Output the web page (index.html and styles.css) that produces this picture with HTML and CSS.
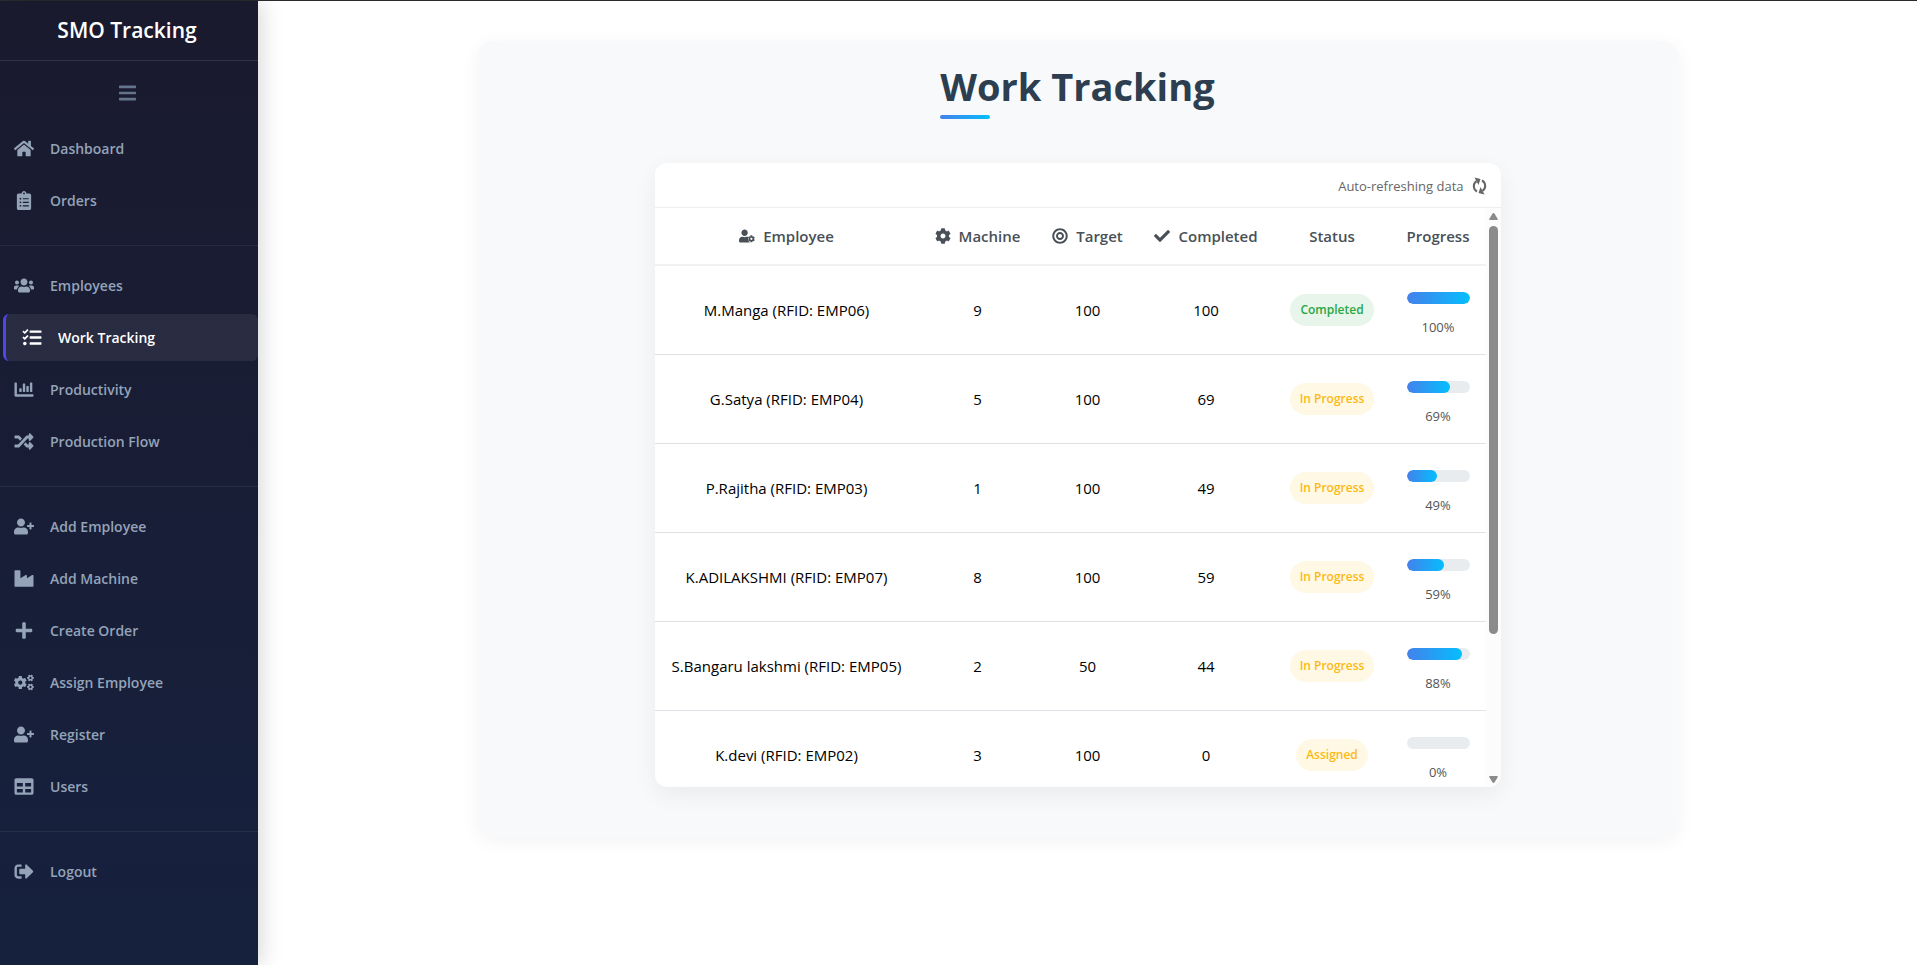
FILE: index.html
```html
<!DOCTYPE html>
<html lang="en">
<head>
<meta charset="utf-8">
<title>Work Tracking</title>
<link rel="stylesheet" href="styles.css">
</head>
<body>
<svg class="sprite" aria-hidden="true">
  <symbol id="bars" viewBox="0 0 448 512"><path d="M16 132h416c8.800 0 16-7.200 16-16V76c0-8.800-7.200-16-16-16H16C7.200 60 0 67.200 0 76v40c0 8.800 7.200 16 16 16zm0 160h416c8.800 0 16-7.200 16-16v-40c0-8.800-7.200-16-16-16H16c-8.800 0-16 7.200-16 16v40c0 8.800 7.200 16 16 16zm0 160h416c8.800 0 16-7.200 16-16v-40c0-8.800-7.200-16-16-16H16c-8.800 0-16 7.200-16 16v40c0 8.800 7.200 16 16 16z"/></symbol>
  <symbol id="home" viewBox="0 0 576 512"><path d="M280.370 148.260L96 300.110V464a16 16 0 0 0 16 16l112.060-.290a16 16 0 0 0 15.920-16V368a16 16 0 0 1 16-16h64a16 16 0 0 1 16 16v95.640a16 16 0 0 0 16 16.050L464 480a16 16 0 0 0 16-16V300L295.670 148.260a12.190 12.190 0 0 0-15.300 0zM571.600 251.470L488 182.560V44.050a12 12 0 0 0-12-12h-56a12 12 0 0 0-12 12v72.610L318.470 43a48 48 0 0 0-61 0L4.340 251.470a12 12 0 0 0-1.600 16.900l25.500 31A12 12 0 0 0 45.150 301l235.220-193.740a12.190 12.190 0 0 1 15.300 0L530.900 301a12 12 0 0 0 16.900-1.600l25.500-31a12 12 0 0 0-1.700-16.930z"/></symbol>
  <symbol id="clipboard" viewBox="0 0 384 512"><path d="M336 64h-80c0-35.300-28.700-64-64-64s-64 28.700-64 64H48C21.500 64 0 85.500 0 112v352c0 26.500 21.500 48 48 48h288c26.500 0 48-21.500 48-48V112c0-26.500-21.500-48-48-48zM96 424c-13.300 0-24-10.700-24-24s10.700-24 24-24 24 10.700 24 24-10.700 24-24 24zm0-96c-13.300 0-24-10.700-24-24s10.700-24 24-24 24 10.700 24 24-10.700 24-24 24zm0-96c-13.300 0-24-10.700-24-24s10.700-24 24-24 24 10.700 24 24-10.700 24-24 24zm96-192c13.300 0 24 10.700 24 24s-10.700 24-24 24-24-10.700-24-24 10.700-24 24-24zm128 368c0 4.400-3.600 8-8 8H168c-4.400 0-8-3.600-8-8v-16c0-4.400 3.600-8 8-8h144c4.400 0 8 3.600 8 8v16zm0-96c0 4.400-3.600 8-8 8H168c-4.400 0-8-3.600-8-8v-16c0-4.400 3.600-8 8-8h144c4.400 0 8 3.600 8 8v16zm0-96c0 4.400-3.600 8-8 8H168c-4.400 0-8-3.600-8-8v-16c0-4.400 3.600-8 8-8h144c4.400 0 8 3.600 8 8v16z"/></symbol>
  <symbol id="users" viewBox="0 0 640 512"><path d="M96 224c35.300 0 64-28.700 64-64s-28.700-64-64-64-64 28.700-64 64 28.700 64 64 64zm448 0c35.300 0 64-28.700 64-64s-28.700-64-64-64-64 28.700-64 64 28.700 64 64 64zm32 32h-64c-17.600 0-33.500 7.100-45.100 18.600 40.300 22.100 68.900 62 75.100 109.400h66c17.700 0 32-14.300 32-32v-32c0-35.300-28.700-64-64-64zm-256 0c61.900 0 112-50.100 112-112S381.900 32 320 32 208 82.100 208 144s50.100 112 112 112zm76.800 32h-8.300c-20.800 10-43.900 16-68.500 16s-47.600-6-68.500-16h-8.300C179.600 288 128 339.600 128 403.200V432c0 26.500 21.500 48 48 48h288c26.500 0 48-21.500 48-48v-28.800c0-63.600-51.600-115.200-115.200-115.200zm-223.700-13.400C161.500 263.100 145.600 256 128 256H64c-35.300 0-64 28.700-64 64v32c0 17.700 14.300 32 32 32h65.900c6.300-47.400 34.900-87.300 75.200-109.400z"/></symbol>
  <symbol id="tasks" viewBox="0 0 512 512"><path d="M139.610 35.500a12 12 0 0 0-17 0L58.930 98.810l-22.700-22.120a12 12 0 0 0-17 0L3.530 92.410a12 12 0 0 0 0 17l47.590 47.400a12.780 12.780 0 0 0 17.610 0l15.590-15.620L156.520 69a12.090 12.090 0 0 0 .090-17zm0 159.190a12 12 0 0 0-17 0l-63.680 63.720-22.700-22.100a12 12 0 0 0-17 0L3.530 252a12 12 0 0 0 0 17L51 316.500a12.770 12.770 0 0 0 17.600 0l15.700-15.690 72.200-72.220a12 12 0 0 0 .090-16.900zM64 368c-26.490 0-48.590 21.500-48.590 48S37.530 464 64 464a48 48 0 0 0 0-96zm432 16H208a16 16 0 0 0-16 16v32a16 16 0 0 0 16 16h288a16 16 0 0 0 16-16v-32a16 16 0 0 0-16-16zm0-320H208a16 16 0 0 0-16 16v32a16 16 0 0 0 16 16h288a16 16 0 0 0 16-16V80a16 16 0 0 0-16-16zm0 160H208a16 16 0 0 0-16 16v32a16 16 0 0 0 16 16h288a16 16 0 0 0 16-16v-32a16 16 0 0 0-16-16z"/></symbol>
  <symbol id="chart" viewBox="0 0 512 512"><path d="M332.800 320h38.400c6.400 0 12.800-6.400 12.800-12.800V172.800c0-6.400-6.400-12.800-12.800-12.800h-38.400c-6.400 0-12.800 6.400-12.800 12.800v134.400c0 6.400 6.400 12.800 12.800 12.800zm96 0h38.400c6.400 0 12.800-6.400 12.800-12.800V76.800c0-6.400-6.400-12.800-12.800-12.800h-38.400c-6.400 0-12.800 6.400-12.800 12.800v230.400c0 6.400 6.400 12.800 12.800 12.800zm-288 0h38.400c6.400 0 12.800-6.400 12.800-12.800v-70.400c0-6.400-6.400-12.800-12.800-12.800h-38.400c-6.400 0-12.800 6.400-12.800 12.800v70.400c0 6.400 6.400 12.800 12.800 12.800zm96 0h38.400c6.400 0 12.800-6.400 12.800-12.800V108.800c0-6.400-6.400-12.800-12.800-12.800h-38.400c-6.400 0-12.800 6.400-12.800 12.800v198.400c0 6.400 6.400 12.800 12.800 12.800zM496 384H64V80c0-8.840-7.160-16-16-16H16C7.160 64 0 71.160 0 80v336c0 17.670 14.330 32 32 32h464c8.840 0 16-7.160 16-16v-32c0-8.840-7.160-16-16-16z"/></symbol>
  <symbol id="shuffle" viewBox="0 0 512 512"><path d="M504.971 359.029c9.373 9.373 9.373 24.569 0 33.941l-80 79.984c-15.010 15.010-40.971 4.490-40.971-16.971V416h-58.785a12.004 12.004 0 0 1-8.773-3.812l-70.556-75.596 53.333-57.143L352 336h32v-39.981c0-21.438 25.943-31.998 40.971-16.971l80 79.981zM12 176h84l52.781 56.551 53.333-57.143-70.556-75.596A11.999 11.999 0 0 0 122.785 96H12c-6.627 0-12 5.373-12 12v56c0 6.627 5.373 12 12 12zm372 0v39.984c0 21.460 25.961 31.980 40.971 16.971l80-79.984c9.373-9.373 9.373-24.569 0-33.941l-80-79.981C409.943 24.021 384 34.582 384 56.019V96h-58.785a12.004 12.004 0 0 0-8.773 3.812L96 336H12c-6.627 0-12 5.373-12 12v56c0 6.627 5.373 12 12 12h110.785c3.326 0 6.503-1.381 8.773-3.812L352 176h32z"/></symbol>
  <symbol id="user-plus" viewBox="0 0 640 512"><path d="M624 208h-64v-64c0-8.800-7.200-16-16-16h-32c-8.800 0-16 7.200-16 16v64h-64c-8.800 0-16 7.200-16 16v32c0 8.800 7.200 16 16 16h64v64c0 8.800 7.200 16 16 16h32c8.800 0 16-7.200 16-16v-64h64c8.800 0 16-7.200 16-16v-32c0-8.800-7.200-16-16-16zm-400 48c70.700 0 128-57.300 128-128S294.700 0 224 0 96 57.300 96 128s57.300 128 128 128zm89.600 32h-16.700c-22.200 10.200-46.900 16-72.900 16s-50.600-5.800-72.900-16h-16.700C60.200 288 0 348.200 0 422.400V464c0 26.500 21.500 48 48 48h352c26.500 0 48-21.500 48-48v-41.600c0-74.200-60.200-134.400-134.400-134.400z"/></symbol>
  <symbol id="industry" viewBox="0 0 512 512"><path d="M475.115 163.781L336 252.309v-68.280c0-18.916-20.931-30.399-36.885-20.248L160 252.309V56c0-13.255-10.745-24-24-24H24C10.745 32 0 42.745 0 56v400c0 13.255 10.745 24 24 24h464c13.255 0 24-10.745 24-24V184.029c0-18.917-20.931-30.399-36.885-20.248z"/></symbol>
  <symbol id="plus" viewBox="0 0 448 512"><path d="M416 208H272V64c0-17.670-14.330-32-32-32h-32c-17.670 0-32 14.330-32 32v144H32c-17.670 0-32 14.330-32 32v32c0 17.670 14.330 32 32 32h144v144c0 17.670 14.330 32 32 32h32c17.670 0 32-14.330 32-32V304h144c17.670 0 32-14.330 32-32v-32c0-17.670-14.330-32-32-32z"/></symbol>
  <symbol id="cog" viewBox="0 0 512 512"><path id="gear" d="M487.400 315.700l-42.600-24.600c4.300-23.200 4.300-47 0-70.200l42.600-24.600c4.900-2.800 7.100-8.600 5.500-14-11.100-35.600-30-67.800-54.700-94.600-3.800-4.100-10-5.100-14.800-2.300L380.800 110c-17.900-15.400-38.500-27.300-60.800-35.100V25.800c0-5.600-3.900-10.500-9.400-11.700-36.700-8.200-74.300-7.800-109.200 0-5.500 1.200-9.400 6.100-9.400 11.700V75c-22.200 7.900-42.800 19.800-60.800 35.100L88.700 85.500c-4.900-2.800-11-1.900-14.800 2.300-24.700 26.700-43.600 58.900-54.700 94.600-1.700 5.400.600 11.200 5.500 14L67.300 221c-4.300 23.200-4.300 47 0 70.200l-42.600 24.600c-4.900 2.800-7.100 8.600-5.500 14 11.100 35.600 30 67.800 54.700 94.600 3.800 4.100 10 5.100 14.800 2.300l42.600-24.600c17.900 15.400 38.500 27.300 60.800 35.100v49.200c0 5.600 3.900 10.500 9.400 11.700 36.700 8.200 74.300 7.800 109.200 0 5.500-1.200 9.400-6.100 9.400-11.700v-49.200c22.200-7.900 42.800-19.800 60.800-35.100l42.600 24.600c4.900 2.800 11 1.900 14.800-2.300 24.700-26.700 43.600-58.900 54.700-94.600 1.500-5.500-.700-11.300-5.600-14.100zM256 336c-44.100 0-80-35.900-80-80s35.900-80 80-80 80 35.900 80 80-35.900 80-80 80z"/></symbol>
  <symbol id="cogs" viewBox="0 0 640 512"><use href="#gear" transform="translate(-14 42) scale(.840)"/><use href="#gear" transform="translate(414 -2) scale(.440) rotate(30 256 256)"/><use href="#gear" transform="translate(414 286) scale(.440) rotate(30 256 256)"/></symbol>
  <symbol id="user-cog" viewBox="0 0 640 512"><path d="M224 256c70.700 0 128-57.300 128-128S294.700 0 224 0 96 57.300 96 128s57.300 128 128 128zm89.600 32h-16.700c-22.200 10.200-46.900 16-72.900 16s-50.600-5.800-72.900-16h-16.700C60.200 288 0 348.200 0 422.400V464c0 26.500 21.500 48 48 48h352c12 0 22-4 30-11-40-28-66-62-72-100 0-12 12-22 10-35-4-16-6-40 6-60-18-11-38-18-60.400-18z"/><use href="#gear" transform="translate(350 222) scale(.570)"/></symbol>
  <symbol id="table" viewBox="0 0 512 512"><path d="M464 32H48C21.490 32 0 53.490 0 80v352c0 26.510 21.490 48 48 48h416c26.510 0 48-21.490 48-48V80c0-26.510-21.490-48-48-48zM224 416H64v-96h160v96zm0-160H64v-96h160v96zm224 160H288v-96h160v96zm0-160H288v-96h160v96z"/></symbol>
  <symbol id="logout" viewBox="0 0 512 512"><path d="M497 273L329 441c-15 15-41 4.500-41-17v-96H152c-13.300 0-24-10.700-24-24v-96c0-13.300 10.700-24 24-24h136V88c0-21.400 25.900-32 41-17l168 168c9.300 9.400 9.300 24.600 0 34zM192 436v-40c0-6.600-5.400-12-12-12H96c-17.700 0-32-14.300-32-32V160c0-17.700 14.300-32 32-32h84c6.600 0 12-5.400 12-12V76c0-6.600-5.400-12-12-12H96c-53 0-96 43-96 96v192c0 53 43 96 96 96h84c6.600 0 12-5.400 12-12z"/></symbol>
  <symbol id="target" viewBox="0 0 496 512"><path d="M248 8C111.030 8 0 119.030 0 256s111.030 248 248 248 248-111.030 248-248S384.970 8 248 8zm0 432c-101.690 0-184-82.290-184-184 0-101.690 82.290-184 184-184 101.690 0 184 82.290 184 184 0 101.690-82.290 184-184 184zm0-312c-70.690 0-128 57.310-128 128s57.310 128 128 128 128-57.310 128-128-57.310-128-128-128zm0 192c-35.290 0-64-28.710-64-64s28.710-64 64-64 64 28.710 64 64-28.710 64-64 64z"/></symbol>
  <symbol id="check" viewBox="0 0 512 512"><path d="M173.898 439.404l-166.400-166.400c-9.997-9.997-9.997-26.206 0-36.204l36.203-36.204c9.997-9.998 26.207-9.998 36.204 0L192 312.690 432.095 72.596c9.997-9.997 26.207-9.997 36.204 0l36.203 36.204c9.997 9.997 9.997 26.206 0 36.204l-294.400 294.401c-9.998 9.997-26.207 9.997-36.204-.001z"/></symbol>
  <symbol id="sync" viewBox="1 0 14 18"><path d="M5.500 14.500A6 6 0 0 1 5 4.200M10.500 3.500A6 6 0 0 1 11 13.800" fill="none" stroke="currentColor" stroke-width="2"/><path d="M3 .6l6 1.400L7 8zM13 17.400l-6-1.400L9 10z"/></symbol>
</svg>
<div class="app">
  <aside class="sidebar">
    <div class="brand">SMO Tracking</div>
    <button class="toggle" type="button" aria-label="Toggle menu"><svg class="icon"><use href="#bars"/></svg></button>
    <nav class="nav">
      <div class="group">
        <a class="item" href="#"><svg class="icon"><use href="#home"/></svg>Dashboard</a>
        <a class="item" href="#"><svg class="icon"><use href="#clipboard"/></svg>Orders</a>
      </div>
      <div class="group">
        <a class="item" href="#"><svg class="icon"><use href="#users"/></svg>Employees</a>
        <a class="item active" href="#" aria-current="page"><svg class="icon"><use href="#tasks"/></svg>Work Tracking</a>
        <a class="item" href="#"><svg class="icon"><use href="#chart"/></svg>Productivity</a>
        <a class="item" href="#"><svg class="icon"><use href="#shuffle"/></svg>Production Flow</a>
      </div>
      <div class="group">
        <a class="item" href="#"><svg class="icon"><use href="#user-plus"/></svg>Add Employee</a>
        <a class="item" href="#"><svg class="icon"><use href="#industry"/></svg>Add Machine</a>
        <a class="item" href="#"><svg class="icon"><use href="#plus"/></svg>Create Order</a>
        <a class="item" href="#"><svg class="icon"><use href="#cogs"/></svg>Assign Employee</a>
        <a class="item" href="#"><svg class="icon"><use href="#user-plus"/></svg>Register</a>
        <a class="item" href="#"><svg class="icon"><use href="#table"/></svg>Users</a>
      </div>
      <div class="group">
        <a class="item" href="#"><svg class="icon"><use href="#logout"/></svg>Logout</a>
      </div>
    </nav>
  </aside>
  <main class="main">
    <section class="panel">
      <h1 class="title">Work Tracking</h1>
      <div class="card">
        <div class="refresh">Auto-refreshing data<svg class="icon"><use href="#sync"/></svg></div>
        <div class="body">
          <div class="scroller">
            <table class="table">
              <colgroup><col class="c-employee"><col class="c-machine"><col class="c-target"><col class="c-completed"><col class="c-status"><col class="c-progress"></colgroup>
              <thead>
                <tr>
                  <th><span class="head"><svg class="icon"><use href="#user-cog"/></svg>Employee</span></th>
                  <th><span class="head"><svg class="icon"><use href="#cog"/></svg>Machine</span></th>
                  <th><span class="head"><svg class="icon"><use href="#target"/></svg>Target</span></th>
                  <th><span class="head"><svg class="icon"><use href="#check"/></svg>Completed</span></th>
                  <th>Status</th>
                  <th>Progress</th>
                </tr>
              </thead>
              <tbody>
                <tr><td>M.Manga (RFID: EMP06)</td><td>9</td><td>100</td><td>100</td><td><span class="badge done">Completed</span></td><td><div class="bar"><div class="fill" style="width:100%"></div></div><div class="percent">100%</div></td></tr>
                <tr><td>G.Satya (RFID: EMP04)</td><td>5</td><td>100</td><td>69</td><td><span class="badge">In Progress</span></td><td><div class="bar"><div class="fill" style="width:69%"></div></div><div class="percent">69%</div></td></tr>
                <tr><td>P.Rajitha (RFID: EMP03)</td><td>1</td><td>100</td><td>49</td><td><span class="badge">In Progress</span></td><td><div class="bar"><div class="fill" style="width:49%"></div></div><div class="percent">49%</div></td></tr>
                <tr><td>K.ADILAKSHMI (RFID: EMP07)</td><td>8</td><td>100</td><td>59</td><td><span class="badge">In Progress</span></td><td><div class="bar"><div class="fill" style="width:59%"></div></div><div class="percent">59%</div></td></tr>
                <tr><td>S.Bangaru lakshmi (RFID: EMP05)</td><td>2</td><td>50</td><td>44</td><td><span class="badge">In Progress</span></td><td><div class="bar"><div class="fill" style="width:88%"></div></div><div class="percent">88%</div></td></tr>
                <tr><td>K.devi (RFID: EMP02)</td><td>3</td><td>100</td><td>0</td><td><span class="badge">Assigned</span></td><td><div class="bar"><div class="fill" style="width:0%"></div></div><div class="percent">0%</div></td></tr>
              </tbody>
            </table>
          </div>
          <div class="scrollbar" aria-hidden="true">
            <svg class="arrow" viewBox="0 0 9 7"><path d="M4.500 0Q5.200 0 5.600.7L8.800 6Q9 7 8 7H1Q0 7 .2 6L3.400.7Q3.800 0 4.500 0z"/></svg>
            <div class="track"><div class="thumb"></div></div>
            <svg class="arrow" viewBox="0 0 9 7"><path d="M4.500 7Q5.200 7 5.600 6.300L8.800 1Q9 0 8 0H1Q0 0 .2 1L3.400 6.300Q3.800 7 4.500 7z"/></svg>
          </div>
        </div>
      </div>
    </section>
  </main>
</div>
</body>
</html>
```
FILE: styles.css
```css
* { box-sizing: border-box; }
body {
  margin: 0;
  background: #fff;
  color: #000;
  font: 15px/24px "Open Sans", "Noto Sans", sans-serif;
}
.sprite { position: absolute; width: 0; height: 0; }
.icon { flex: none; fill: currentColor; }
.app {
  display: flex;
  min-height: 100vh;
  border-top: 1px solid #2b2b2f;
}

/* Sidebar */
.sidebar {
  flex: none;
  width: 258px;
  background: linear-gradient(180deg, #1a1a2e 0%, #16213e 100%);
  box-shadow: 4px 0 20px rgba(0, 0, 0, .15);
  color: #94a3b8;
}
.brand {
  height: 60px;
  padding-right: 4px;
  border-bottom: 1px solid rgba(255, 255, 255, .1);
  color: #fff;
  font-size: 21px;
  font-weight: 600;
  line-height: 59px;
  text-align: center;
}
.toggle {
  display: block;
  margin: 19px auto;
  padding: 3px 6px 3px 3px;
  border: 0;
  background: none;
  color: #64748b;
}
.toggle .icon { display: block; width: 17px; height: 20px; }
.nav { font-size: 14px; font-weight: 600; }
.group {
  display: flex;
  flex-direction: column;
  gap: 5px;
  padding-bottom: 21px;
}
.group + .group {
  padding-top: 16px;
  border-top: 1px solid rgba(255, 255, 255, .07);
}
.item {
  display: flex;
  align-items: center;
  gap: 16px;
  height: 47px;
  padding-left: 14px;
  color: inherit;
  text-decoration: none;
}
.item .icon { width: 20px; height: 19px; }
.item.active {
  margin-left: 3px;
  padding-left: 16px;
  border-left: 3px solid #4f46e5;
  border-radius: 6px;
  background: rgba(255, 255, 255, .07);
  color: #fff;
}

/* Content */
.main { flex: 1; min-width: 0; padding: 40px 20px 40px 0; }
.panel {
  display: flex;
  flex-direction: column;
  align-items: center;
  max-width: 1200px;
  margin: 0 auto;
  padding: 18px 20px 50px;
  border-radius: 16px;
  background: #f8f9fb;
  box-shadow: 0 4px 20px rgba(0, 0, 0, .05);
}
.title {
  margin: 0 0 44px;
  color: #2c3e50;
  font-size: 38px;
  font-weight: 700;
  line-height: 54px;
}
.title::after {
  content: "";
  display: block;
  width: 50px;
  height: 4px;
  margin-top: 2px;
  border-radius: 2px;
  background: linear-gradient(90deg, #4481eb, #04befe);
}
.card {
  overflow: hidden;
  width: 100%;
  max-width: 846px;
  border-radius: 12px;
  background: #fff;
  box-shadow: 0 8px 24px rgba(0, 0, 0, .06);
}
.refresh {
  display: flex;
  align-items: center;
  justify-content: flex-end;
  gap: 8px;
  height: 45px;
  padding: 2px 14px 0 0;
  border-bottom: 1px solid #eee;
  color: #666;
  font-size: 13px;
}
.refresh .icon { width: 15px; height: 18px; }
.body { display: flex; height: 579px; }
.scroller { flex: 1; overflow-y: auto; scrollbar-width: none; }
.table {
  width: 100%;
  border-collapse: separate;
  border-spacing: 0;
  table-layout: fixed;
  text-align: center;
}
.c-employee { width: 264px; }
.c-machine { width: 118px; }
.c-target { width: 102px; }
.c-completed { width: 135px; }
.c-status { width: 117px; }
.c-progress { width: 95px; }
th {
  height: 58px;
  padding: 0;
  border-bottom: 2px solid #f0f1f2;
  color: #495057;
  font-weight: 600;
}
td { height: 89px; padding: 0; border-bottom: 1px solid #dee2e6; white-space: nowrap; }
.head { display: flex; align-items: center; justify-content: center; gap: 8px; }
.head .icon { width: 16px; height: 16px; }
.badge {
  display: inline-block;
  padding: 4px 10px;
  border-radius: 16px;
  background: #fff8e5;
  color: #fdba12;
  font-size: 12px;
  font-weight: 600;
  vertical-align: middle;
}
.badge.done { background: #e8f5ea; color: #28a745; }
.bar {
  overflow: hidden;
  height: 12px;
  margin: 10px 16px 11px;
  border-radius: 6px;
  background: #e9ecef;
}
.fill {
  height: 100%;
  border-radius: 6px;
  background: linear-gradient(90deg, #4481eb, #04befe);
}
.percent { color: #555; font-size: 13px; }
.scrollbar {
  display: flex;
  flex-direction: column;
  align-items: center;
  gap: 6px;
  width: 15px;
  padding: 5px 0 4px;
  background: #fcfcfc;
}
.arrow { width: 9px; height: 7px; fill: #8b8b8b; }
.track { flex: 1; width: 9px; }
.thumb { height: 75%; border-radius: 5px; background: #8b8b8b; }
```
